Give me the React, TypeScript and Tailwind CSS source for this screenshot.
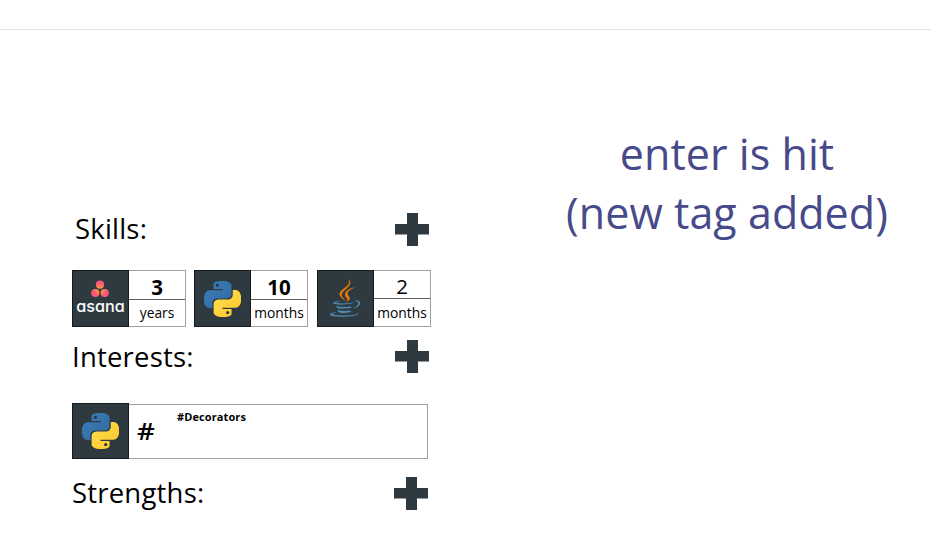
import React from "react";

function PythonLogo() {
  return (
    <svg viewBox="0 0 24 24" className="h-9 w-[37px]" preserveAspectRatio="none">
      <defs>
        <linearGradient id="pyBlue" x1="0" y1="0" x2="1" y2="1">
          <stop offset="0" stopColor="#3a7ebb" />
          <stop offset="1" stopColor="#33699c" />
        </linearGradient>
        <linearGradient id="pyYellow" x1="0" y1="0" x2="1" y2="1">
          <stop offset="0" stopColor="#ffdf4c" />
          <stop offset="1" stopColor="#fdc62f" />
        </linearGradient>
      </defs>
      <path
        fill="url(#pyBlue)"
        d="M14.25.18l.9.2.73.26.59.3.45.32.34.34.25.34.16.33.1.3.04.26.02.2-.01.13V8.5l-.05.63-.13.55-.21.46-.26.38-.3.31-.33.25-.35.19-.35.14-.33.1-.3.07-.26.04-.21.02H8.77l-.69.05-.59.14-.5.22-.41.27-.33.32-.27.35-.2.36-.15.37-.1.35-.07.32-.04.27-.02.21v3.06H3.17l-.21-.03-.28-.07-.32-.12-.35-.18-.36-.26-.36-.36-.35-.46-.32-.59-.28-.73-.21-.88-.14-1.05-.05-1.23.06-1.22.16-1.04.24-.87.32-.71.36-.57.4-.44.42-.33.42-.24.4-.16.36-.1.32-.05.24-.01h.16l.06.01h8.16v-.83H6.18l-.01-2.75-.02-.37.05-.34.11-.31.17-.28.25-.26.31-.23.38-.2.44-.18.51-.15.58-.12.64-.1.71-.06.77-.04.84-.02 1.27.05zm-6.3 1.98l-.23.33-.08.41.08.41.23.34.33.22.41.09.41-.09.33-.22.23-.34.08-.41-.08-.41-.23-.33-.33-.22-.41-.09-.41.09z"
      />
      <path
        fill="url(#pyYellow)"
        d="M21.1 6.11l.28.06.32.12.35.18.36.27.36.35.35.47.32.59.28.73.21.88.14 1.04.05 1.23-.06 1.23-.16 1.04-.24.86-.32.71-.36.57-.4.45-.42.33-.42.24-.4.16-.36.09-.32.05-.24.02-.16-.01h-8.22v.82h5.84l.01 2.76.02.36-.05.34-.11.31-.17.29-.25.25-.31.24-.38.2-.44.17-.51.15-.58.13-.64.09-.71.07-.77.04-.84.01-1.27-.04-1.07-.14-.9-.2-.73-.25-.59-.3-.45-.33-.34-.34-.25-.34-.16-.33-.1-.3-.04-.25-.02-.2.01-.13v-5.34l.05-.64.13-.54.21-.46.26-.38.3-.32.33-.24.35-.2.35-.14.33-.1.3-.06.26-.04.21-.02.13-.01h5.84l.69-.05.59-.14.5-.21.41-.28.33-.32.27-.35.2-.36.15-.36.1-.35.07-.32.04-.28.02-.21V6.07h2.09l.14.01zm-6.47 14.25l-.23.33-.08.41.08.41.23.33.33.23.41.08.41-.08.33-.23.23-.33.08-.41-.08-.41-.23-.33-.33-.23-.41-.08-.41.08z"
      />
    </svg>
  );
}

function JavaLogo() {
  return (
    <svg viewBox="0 0 128 128" className="mr-px h-10 w-[42px]" preserveAspectRatio="none">
      <g fill="#4f8bb3" stroke="#4f8bb3" strokeWidth="0.8">
        <path d="M47.617 98.12s-4.767 2.774 3.397 3.71c9.892 1.13 14.947.968 25.845-1.092 0 0 2.871 1.795 6.873 3.351-24.439 10.47-55.308-.607-36.115-5.969zm-2.988-13.665s-5.348 3.959 2.823 4.805c10.567 1.091 18.91 1.18 33.354-1.6 0 0 1.993 2.025 5.132 3.131-29.542 8.64-62.446.68-41.309-6.336z" />
        <path d="M102.123 108.229s3.529 2.91-3.888 5.159c-14.102 4.272-58.706 5.56-71.094.171-4.451-1.938 3.899-4.625 6.526-5.192 2.739-.593 4.303-.485 4.303-.485-4.953-3.487-32.013 6.85-13.743 9.815 49.821 8.076 90.817-3.637 77.896-9.468zM49.912 70.294s-22.686 5.389-8.033 7.348c6.188.828 18.518.638 30.011-.326 9.39-.789 18.813-2.474 18.813-2.474s-3.308 1.419-5.704 3.053c-23.042 6.061-67.544 3.238-54.731-2.958 10.832-5.239 19.644-4.643 19.644-4.643zm40.697 22.747c23.421-12.167 12.591-23.86 5.032-22.285-1.848.385-2.677.72-2.677.72s.688-1.079 2-1.543c14.953-5.255 26.451 15.503-4.823 23.725 0-.002.359-.327.468-.617z" />
      </g>
      <g fill="#ec7a08" stroke="#ec7a08" strokeWidth="0.8">
        <path d="M69.802 61.271c6.025 6.935-1.58 13.17-1.58 13.17s15.289-7.891 8.269-17.777c-6.559-9.215-11.587-13.792 15.635-29.58 0 .001-42.731 10.67-22.324 34.187z" />
        <path d="M76.491 1.587S89.459 14.563 64.188 34.51c-20.266 16.006-4.621 25.13-.007 35.559-11.831-10.673-20.509-20.07-14.688-28.815C58.041 28.42 81.722 22.195 76.491 1.587z" />
      </g>
    </svg>
  );
}

function AsanaLogo() {
  return (
    <div className="flex flex-col items-center pb-[2px]">
      <svg viewBox="0 0 18 18" className="h-[18px] w-[18px]">
        <defs>
          <radialGradient id="asanaDots" gradientUnits="userSpaceOnUse" cx="9" cy="9.8" r="10">
            <stop offset="0" stopColor="#ffb03c" />
            <stop offset="0.35" stopColor="#fd8050" />
            <stop offset="0.65" stopColor="#fb5c74" />
            <stop offset="1" stopColor="#fa4f8a" />
          </radialGradient>
        </defs>
        <g fill="url(#asanaDots)">
          <circle cx="9" cy="4.7" r="4.1" />
          <circle cx="4.3" cy="13" r="4.1" />
          <circle cx="13.7" cy="13" r="4.1" />
        </g>
      </svg>
      <span className="mt-[-1px] font-['Inter',sans-serif] text-[16.2px] leading-[18px] font-medium text-white [font-feature-settings:'cv11']">
        asana
      </span>
    </div>
  );
}

function Plus() {
  return (
    <svg viewBox="0 0 34 33" className="h-[33px] w-[34px]">
      <path fill="#2e3a40" d="M12 0h11v11h11v10.5H23V33H12V21.5H0V11h12z" />
    </svg>
  );
}

function LogoTile({ children }: { children: React.ReactNode }) {
  return (
    <div className="flex h-full w-[57px] shrink-0 items-center justify-center border border-[#151b1e] bg-[#2e3a40]">
      {children}
    </div>
  );
}

type SkillProps = {
  logo: React.ReactNode;
  amount: string;
  unit: string;
  bold?: boolean;
};

function SkillCard({ logo, amount, unit, bold = true }: SkillProps) {
  return (
    <div className="flex h-[57px] w-[114px]">
      <LogoTile>{logo}</LogoTile>
      <div className="flex flex-1 flex-col border border-l-0 border-[#a0a0a0] text-center text-black">
        <div
          className={`flex items-center justify-center border-b border-[#606060] leading-none ${
            bold ? "h-[29px] pt-1 text-[20.5px] font-bold" : "h-7 pt-1 text-[20.5px] font-normal"
          }`}
        >
          {amount}
        </div>
        <div className="flex flex-1 items-center justify-center text-[13.8px] leading-none">{unit}</div>
      </div>
    </div>
  );
}

export default function App() {
  return (
    <div className="flex h-[542px] w-[931px] flex-col overflow-hidden bg-white font-['Open_Sans',sans-serif] text-black">
      <header className="h-[30px] shrink-0 border-b border-[#e0e0e0]" />
      <main className="flex flex-1 pl-[72px]">
        <section className="w-[359px] pt-[182px]">
          <div className="flex h-[34px] items-center justify-between pr-[2px] pl-[3px]">
            <h2 className="text-[27.5px] leading-[34px] tracking-[0.2px]">Skills:</h2>
            <Plus />
          </div>
          <div className="mt-6 flex">
            <SkillCard logo={<AsanaLogo />} amount="3" unit="years" />
            <div className="mr-[9px] ml-2">
              <SkillCard logo={<PythonLogo />} amount="10" unit="months" />
            </div>
            <SkillCard logo={<JavaLogo />} amount="2" unit="months" bold={false} />
          </div>
          <div className="mt-[13px] flex h-[33px] items-center justify-between pr-[2px]">
            <h2 className="text-[27.5px] leading-[34px] tracking-[0.2px]">Interests:</h2>
            <Plus />
          </div>
          <div className="mt-[30px] flex h-14 w-[356px]">
            <LogoTile>
              <PythonLogo />
            </LogoTile>
            <div className="mt-px flex flex-1 border border-l-0 border-[#a0a0a0]">
              <span className="w-12 pt-[12px] pl-2 text-[24px] leading-[28px] font-semibold">
                <span className="inline-block origin-left scale-x-[1.15]">#</span>
              </span>
              <span className="pt-[4px] text-[11px] leading-[15px] font-bold tracking-[0.1px]">#Decorators</span>
            </div>
          </div>
          <div className="mt-[17px] flex h-[34px] items-center justify-between pr-[3px]">
            <h2 className="text-[27.5px] leading-[34px] tracking-[0.2px]">Strengths:</h2>
            <Plus />
          </div>
        </section>
        <aside className="ml-[121px] w-[350px] pt-[94px] text-center text-[43px] leading-[59px] tracking-[0.05px] text-[#474a8a]">
          <p>enter is hit</p>
          <p>(new tag added)</p>
        </aside>
      </main>
    </div>
  );
}
